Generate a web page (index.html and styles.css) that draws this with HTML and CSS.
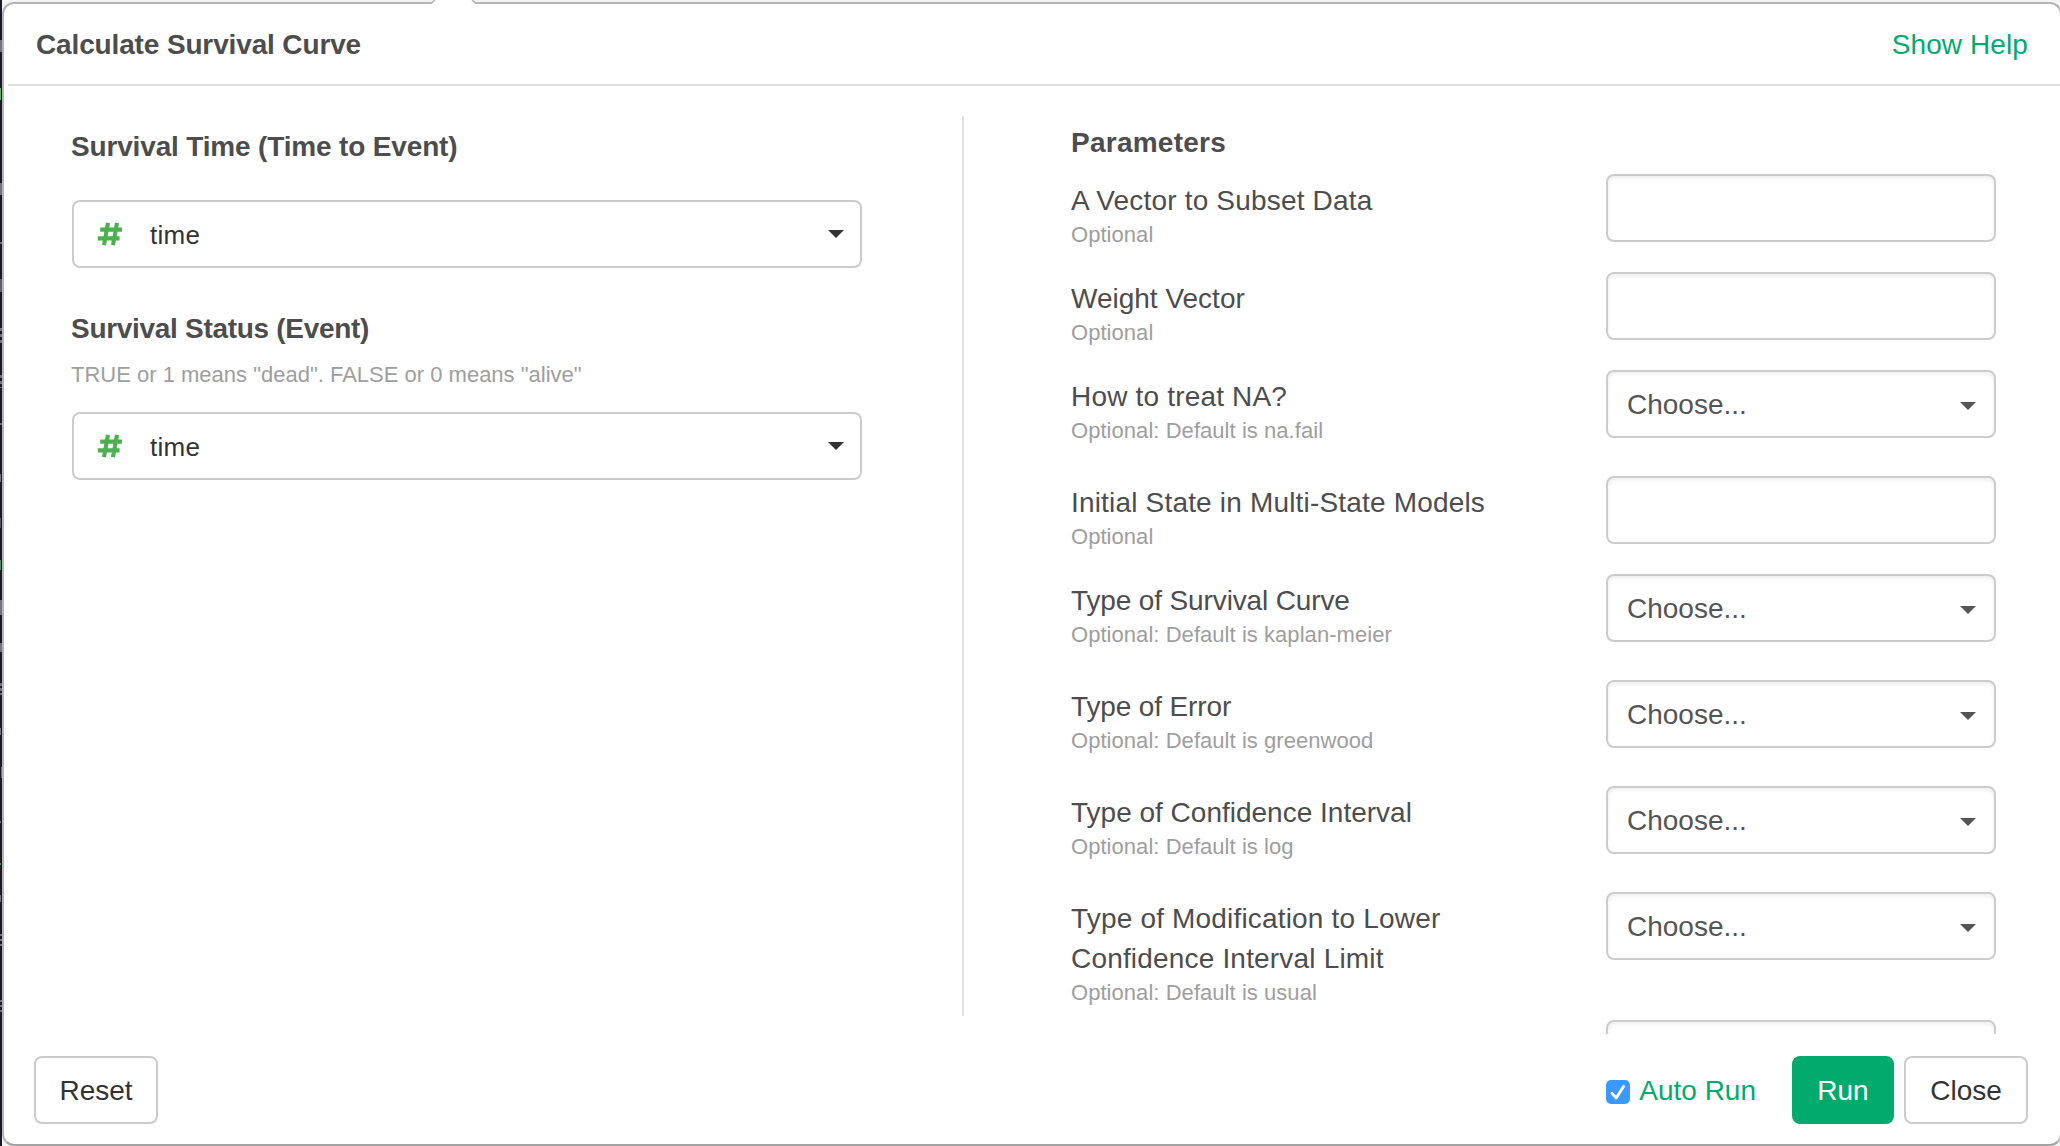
FILE: index.html
```html
<!DOCTYPE html>
<html lang="en">
<head>
<meta charset="utf-8">
<title>Calculate Survival Curve</title>
<link rel="stylesheet" href="styles.css">
</head>
<body>
<svg width="0" height="0" class="defs" aria-hidden="true">
  <symbol id="hash" viewBox="0 0 26 24">
    <path d="M11 .8 7 23.200M20 .8 16 23.200M3.200 7.600h21.800M.8 16.400h21.800" fill="none" stroke="#4caf50" stroke-width="4.100"/>
  </symbol>
</svg>
<div class="dialog">
  <svg class="notch" width="56" height="4" viewBox="0 0 56 4"><path d="M4 4 9 0H46L51 4Z" fill="#fff"/><path d="M4.500 4 9 0M46 0 50.500 4" fill="none" stroke="#b5b5b5" stroke-width="1.500"/></svg>
  <header class="header">
    <h1 class="title">Calculate Survival Curve</h1>
    <a class="help">Show Help</a>
  </header>
  <main class="body">
    <section class="columns">
      <h2 class="heading time-heading">Survival Time (Time to Event)</h2>
      <div class="picker"><svg class="hash"><use href="#hash"/></svg><span>time</span><i class="caret"></i></div>
      <h2 class="heading status-heading">Survival Status (Event)</h2>
      <p class="hint">TRUE or 1 means "dead". FALSE or 0 means "alive"</p>
      <div class="picker"><svg class="hash"><use href="#hash"/></svg><span>time</span><i class="caret"></i></div>
    </section>
    <section class="params">
      <h2 class="heading">Parameters</h2>
      <div class="row"><div class="label wide">A Vector to Subset Data<small>Optional</small></div><div class="field"></div></div>
      <div class="row"><div class="label">Weight Vector<small>Optional</small></div><div class="field"></div></div>
      <div class="row select"><div class="label wide">How to treat NA?<small>Optional: Default is na.fail</small></div><div class="field">Choose...<i class="caret"></i></div></div>
      <div class="row"><div class="label wide">Initial State in Multi-State Models<small>Optional</small></div><div class="field"></div></div>
      <div class="row select"><div class="label narrow">Type of Survival Curve<small>Optional: Default is kaplan-meier</small></div><div class="field">Choose...<i class="caret"></i></div></div>
      <div class="row select"><div class="label narrow">Type of Error<small>Optional: Default is greenwood</small></div><div class="field">Choose...<i class="caret"></i></div></div>
      <div class="row select"><div class="label">Type of Confidence Interval<small>Optional: Default is log</small></div><div class="field">Choose...<i class="caret"></i></div></div>
      <div class="row select"><div class="label wide">Type of Modification to Lower<br>Confidence Interval Limit<small>Optional: Default is usual</small></div><div class="field">Choose...<i class="caret"></i></div></div>
      <div class="row"><div class="label"></div><div class="field"></div></div>
    </section>
  </main>
  <footer class="footer">
    <button class="button">Reset</button>
    <label class="auto"><svg width="24" height="24" viewBox="0 0 24 24"><rect width="24" height="24" rx="5" fill="#3b99fc"/><path d="M6 13.200 10.200 18 17.600 6.500" fill="none" stroke="#fff" stroke-width="2.800" stroke-linecap="round" stroke-linejoin="round"/></svg><span>Auto Run</span></label>
    <button class="button run">Run</button>
    <button class="button">Close</button>
  </footer>
</div>
</body>
</html>
```
FILE: styles.css
```css
* { box-sizing: border-box; }
body {
  margin: 0;
  width: 2060px;
  height: 1146px;
  overflow: hidden;
  padding: 2px 0 0 2px;
  /* sliver of the dark code pane left of the dialog, then the page behind it */
  background:
    linear-gradient(#6f7383, #6f7383) 0 40px / 2px 12px no-repeat,
    linear-gradient(#5fae70, #5fae70) 0 88px / 1px 12px no-repeat,
    linear-gradient(#6f7383, #6f7383) 0 183px / 2px 12px no-repeat,
    linear-gradient(#6f7383, #6f7383) 0 242px / 2px 2px no-repeat,
    linear-gradient(#5d606c, #5d606c) 0 279px / 2px 13px no-repeat,
    repeating-linear-gradient(#6f7383 0 3px, #1b1921 3px 6px) 0 328px / 2px 16px no-repeat,
    repeating-linear-gradient(#6f7383 0 3px, #1b1921 3px 6px) 0 375px / 2px 13px no-repeat,
    linear-gradient(#6f7383, #6f7383) 0 423px / 2px 2px no-repeat,
    linear-gradient(#6f7383, #6f7383) 0 474px / 1px 8px no-repeat,
    linear-gradient(#4d5464, #4d5464) 0 518px / 1px 10px no-repeat,
    linear-gradient(#4f8e60, #4f8e60) 0 560px / 1px 10px no-repeat,
    linear-gradient(#6f7383, #6f7383) 0 600px / 2px 15px no-repeat,
    linear-gradient(#6f7383, #6f7383) 0 643px / 2px 9px no-repeat,
    repeating-linear-gradient(#6f7383 0 3px, #1b1921 3px 5px) 0 683px / 2px 12px no-repeat,
    linear-gradient(#6f7383, #6f7383) 0 728px / 1px 7px no-repeat,
    linear-gradient(#6f7383, #6f7383) 1px 767px / 1px 11px no-repeat,
    linear-gradient(#6f7383, #6f7383) 0 821px / 1px 2px no-repeat,
    linear-gradient(#4f8e60, #4f8e60) 0 863px / 1px 2px no-repeat,
    linear-gradient(#6f7383, #6f7383) 0 895px / 1px 7px no-repeat,
    repeating-linear-gradient(#6f7383 0 2px, #1b1921 2px 5px) 0 934px / 2px 12px no-repeat,
    repeating-linear-gradient(#6f7383 0 2px, #1b1921 2px 5px) 0 1000px / 2px 12px no-repeat,
    linear-gradient(90deg, #1b1921 2px, #f4f4f4 2px);
  font: 28px/40px "Liberation Sans", Arial, sans-serif;
  color: #4d4d4d;
}
.defs { position: absolute; }
.dialog {
  position: relative;
  display: flex;
  flex-direction: column;
  width: 2060px;
  height: 1144px;
  border: 2px solid #b5b5b5;
  border-bottom-color: #a3a3a3;
  border-radius: 12px;
  background: #fff;
}
.notch { position: absolute; left: 422px; top: -4px; }
.header {
  display: flex;
  justify-content: space-between;
  align-items: flex-start;
  flex: none;
  height: 82px;
  margin-left: 4px;
  padding: 21px 32px 0 28px;
  border-bottom: 2px solid #ddd;
}
.title, .heading { margin: 0; font-size: 28px; line-height: 40px; font-weight: 700; }
.title { letter-spacing: -.14px; }
.help, .auto { color: #03aa6d; }
.help { letter-spacing: .1px; }
.body { display: flex; flex: none; height: 948px; }
.columns {
  width: 960px;
  height: 900px;
  margin-top: 30px;
  padding: 0 100px 0 68px;
  border-right: 2px solid #e0e0e0;
}
.columns .heading, .hint { text-indent: -1px; }
.heading.time-heading { padding-top: 11px; margin-bottom: 33px; letter-spacing: -.16px; }
.heading.status-heading { margin: 41px 0 10px; letter-spacing: -.3px; }
.hint { margin: 0 0 21px; font-size: 22px; line-height: 32px; color: #9e9e9e; }
.picker {
  display: flex;
  align-items: center;
  height: 68px;
  padding: 0 16px 0 23px;
  border: 2px solid #ccc;
  border-radius: 8px;
  font-size: 26px;
  color: #333;
}
.picker span { padding-top: 2px; letter-spacing: .3px; }
.hash { width: 26px; height: 24px; margin-right: 27px; }
.caret {
  margin-left: auto;
  border: 8px solid transparent;
  border-top-color: currentColor;
  border-bottom: 0;
}
.params { width: 1032px; padding: 37px 0 0 107px; overflow: hidden; }
.params .heading { height: 51px; letter-spacing: .25px; }
.row { display: flex; justify-content: space-between; align-items: flex-start; min-height: 98px; }
.row.select { min-height: 106px; }
.label { padding: 7px 0 12px; }
.label.wide { letter-spacing: .18px; }
.label.narrow { letter-spacing: -.13px; }
.label small { display: block; margin-top: -1px; font-size: 22px; line-height: 29px; letter-spacing: .05px; color: #9e9e9e; }
.field {
  display: flex;
  align-items: center;
  width: 390px;
  height: 68px;
  padding: 2px 18px 0 19px;
  border: 2px solid #ccc;
  border-radius: 8px;
  box-shadow: inset 0 2px 4px rgba(0, 0, 0, .075);
  color: #555;
}
.field .caret { margin-top: 2px; }
.row.select:nth-last-child(2) { height: 128px; }
.footer { display: flex; padding: 22px 32px 0 30px; }
.auto { display: flex; align-items: center; gap: 9px; margin: 0 36px 0 auto; height: 68px; }
.auto svg { margin-top: 4px; }
.auto span { padding-top: 2px; }
.button {
  width: 124px;
  height: 68px;
  padding: 2px 0 0;
  border: 2px solid #ccc;
  border-radius: 8px;
  background: #fff;
  font: inherit;
  color: #333;
}
.run { width: 102px; margin-right: 10px; border-color: #03aa6d; background: #03aa6d; color: #fff; }
```
